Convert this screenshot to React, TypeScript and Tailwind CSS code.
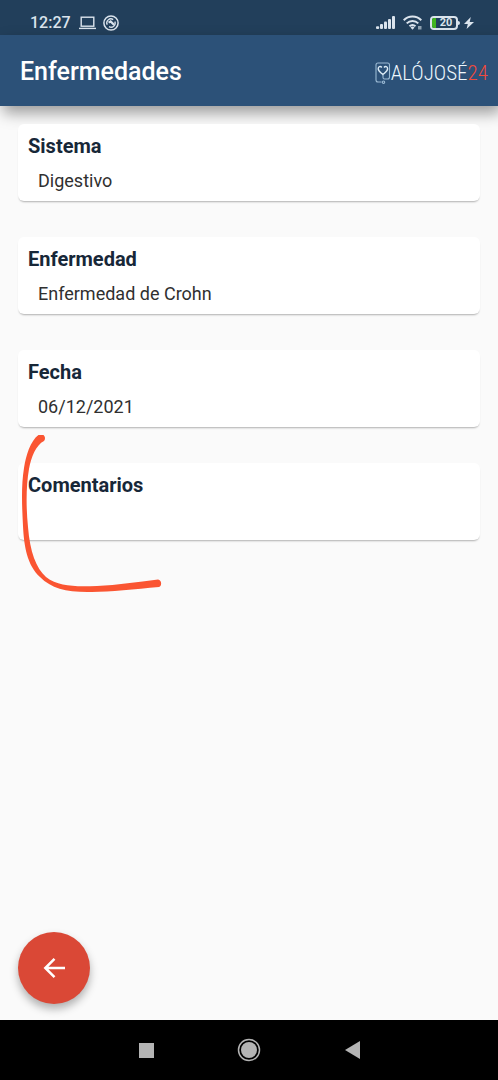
import React from "react";

type Field = { label: string; value: string };

const fields: Field[] = [
  { label: "Sistema", value: "Digestivo" },
  { label: "Enfermedad", value: "Enfermedad de Crohn" },
  { label: "Fecha", value: "06/12/2021" },
  { label: "Comentarios", value: "" },
];

function StatusBar() {
  return (
    <div className="flex h-[35px] items-center justify-between bg-[#223f5b] pt-[10px] pr-6 pl-[30px] text-[#dbe4ed]">
      <div className="flex items-center gap-2">
        <span className="text-base leading-6 font-medium">12:27</span>
        <svg width="17" height="14" viewBox="0 0 17 14" fill="none" stroke="currentColor" strokeWidth="1.4" aria-hidden="true">
          <rect x="2.2" y="1.2" width="12.6" height="9" />
          <path d="M0 12.4h17" />
        </svg>
        <svg className="-ml-px" width="16" height="16" viewBox="0 0 16 16" fill="none" stroke="currentColor" aria-hidden="true">
          <circle cx="8" cy="8" r="7.1" strokeWidth="1.5" />
          <path d="M4.2 9.8A4.1 4.1 0 0 1 10.2 4.6M11.9 6.6A4.1 4.1 0 0 1 6 11.6" strokeWidth="1.3" />
          <path d="M5.6 7.6l2-1.2 3.4 3.4" strokeWidth="2.2" />
        </svg>
      </div>
      <div className="flex items-center gap-2">
        <svg width="19" height="13" viewBox="0 0 19 13" fill="currentColor" aria-hidden="true">
          <rect x="0" y="10.2" width="3.2" height="2.8" rx="1" />
          <rect x="4" y="8" width="3" height="5" rx="1" />
          <rect x="8" y="5.5" width="3" height="7.5" rx="1" />
          <rect x="12" y="3" width="3" height="10" rx="1" />
          <rect x="16" y="0" width="3" height="13" rx="1" />
        </svg>
        <svg width="19" height="15" viewBox="0 0 19 15" fill="none" stroke="currentColor" strokeWidth="2" aria-hidden="true">
          <path d="M.7 5.2a12.5 12.5 0 0 1 17.6 0M3.7 8.4a8.3 8.3 0 0 1 11.6 0M6.5 11.3a4.5 4.5 0 0 1 6 0" />
          <path d="M7.5 12.4L9.5 14.8l2-2.4a3 3 0 0 0-4 0z" fill="currentColor" stroke="none" />
          <rect x="15" y="11" width="3.5" height="3.5" fill="currentColor" stroke="none" opacity=".6" />
        </svg>
        <div className="flex items-center">
          <div className="flex h-[14px] w-7 items-center overflow-hidden rounded border-2 border-current">
            <span className="h-full w-1 bg-[#40b420]" />
            <span className="flex-1 text-center text-[11px] leading-none font-bold">20</span>
          </div>
          <span className="h-1 w-0.5 rounded-r bg-current" />
          <svg className="ml-1" width="10" height="12" viewBox="0 0 10 12" fill="currentColor" aria-hidden="true">
            <path d="M6.8 0L0 7h3.8L2.6 12 10 4.9H5.7z" />
          </svg>
        </div>
      </div>
    </div>
  );
}

function Logo() {
  return (
    <div className="flex items-center pt-1 text-[#eef7fd]">
      <svg width="16" height="24" viewBox="0 0 16 24" fill="none" stroke="#9bbad4" strokeWidth="1.1" aria-hidden="true">
        <path d="M6.500 21H3a2 2 0 0 1-2-2V4a2 2 0 0 1 2-2h9.500a2 2 0 0 1 2 2v12a2 2 0 0 1-2 2H9.500a1.500 1.500 0 0 1-1.500-1.500V14" />
        <path d="M6.800 6.500C5.500 4.600 3.200 5.500 3.200 7.800c0 2.500 2.600 3.900 4.700 5.700 2.100-1.800 4.700-3.200 4.700-5.700 0-2.300-2.300-3.200-3.600-1.300" stroke="#dcebf6" strokeWidth="1.4" />
        <circle cx="8.500" cy="21.200" r="1.200" />
      </svg>
      <span className="font-['Roboto_Condensed','Liberation_Sans_Narrow',Roboto,sans-serif] text-[21px] leading-7 font-light">
        ALÓJOSÉ<span className="text-[#f04a3c]">24</span>
      </span>
    </div>
  );
}

function FieldCard({ label, value }: Field) {
  return (
    <section className="h-[77px] rounded-md bg-white px-[10px] pt-2 shadow-[0_2px_2px_-1px_rgba(0,0,0,0.3)]">
      <h2 className="text-xl leading-7 font-bold text-[#172738]">{label}</h2>
      <p className="mt-[9px] px-[10px] text-lg leading-6 text-[#303030]">{value}</p>
    </section>
  );
}

function PenStroke() {
  return (
    <svg className="pointer-events-none absolute -top-7 left-0" width="150" height="162" viewBox="0 0 150 162" fill="#fa5532" aria-hidden="true">
      <path d="M22 -1C26-1.500 28.500 3 26 6C18 10 13 22 11 34C8 51 8 72 10 92C12 117 18 133 28 142C41 152 57 151.500 79 151C100 150 119 147 140 144.500C144 145 144 151 141 152C117 154 92 157 74 157C49 157.500 34 154 22 142C9 130 6 111 5 91C4 72 3 51 6 33C8 20 13 4 22 -1Z" />
    </svg>
  );
}

export default function App() {
  return (
    <div className="flex min-h-screen flex-col bg-[#fafafa] font-[Roboto,sans-serif]">
      <StatusBar />
      <header className="relative flex h-[71px] items-center justify-between bg-[#2c5178] pr-[10px] pl-5 shadow-[3px_7px_14px_rgba(0,0,0,0.38)]">
        <h1 className="pt-0.5 text-[25px] leading-8 font-medium text-white">Enfermedades</h1>
        <Logo />
      </header>

      <main className="flex flex-1 flex-col px-[18px] pt-[18px] pb-4">
        <div className="flex flex-col gap-9">
          {fields.map((field) => (
            <div key={field.label} className="relative">
              <FieldCard {...field} />
              {field.label === "Comentarios" && <PenStroke />}
            </div>
          ))}
        </div>
        <button
          type="button"
          aria-label="Volver"
          className="mt-auto flex size-[72px] items-center justify-center rounded-full bg-[#da4836] text-white shadow-[0_5px_9px_rgba(0,0,0,0.3)]"
        >
          <svg width="22" height="22" viewBox="0 0 22 22" fill="none" stroke="currentColor" strokeWidth="2.5" aria-hidden="true">
            <path d="M22 11H3M11.5 1.8L2.3 11l9.200 9.200" />
          </svg>
        </button>
      </main>

      <nav className="flex h-[60px] items-center justify-center gap-[79px] bg-black text-[#b4b4b4]">
        <button type="button" aria-label="Recientes" className="flex size-6 items-center justify-center">
          <span className="size-[15px] bg-current" />
        </button>
        <button type="button" aria-label="Inicio" className="flex size-6 items-center justify-center">
          <svg width="24" height="24" viewBox="0 0 24 24" aria-hidden="true">
            <circle cx="12" cy="12" r="10.5" fill="none" stroke="currentColor" strokeWidth="1.5" />
            <circle cx="12" cy="12" r="8" fill="currentColor" />
          </svg>
        </button>
        <button type="button" aria-label="Atrás" className="flex size-6 items-center justify-center">
          <svg width="15" height="18" viewBox="0 0 15 18" fill="currentColor" aria-hidden="true">
            <path d="M15 0v18L0 9z" />
          </svg>
        </button>
      </nav>
    </div>
  );
}
